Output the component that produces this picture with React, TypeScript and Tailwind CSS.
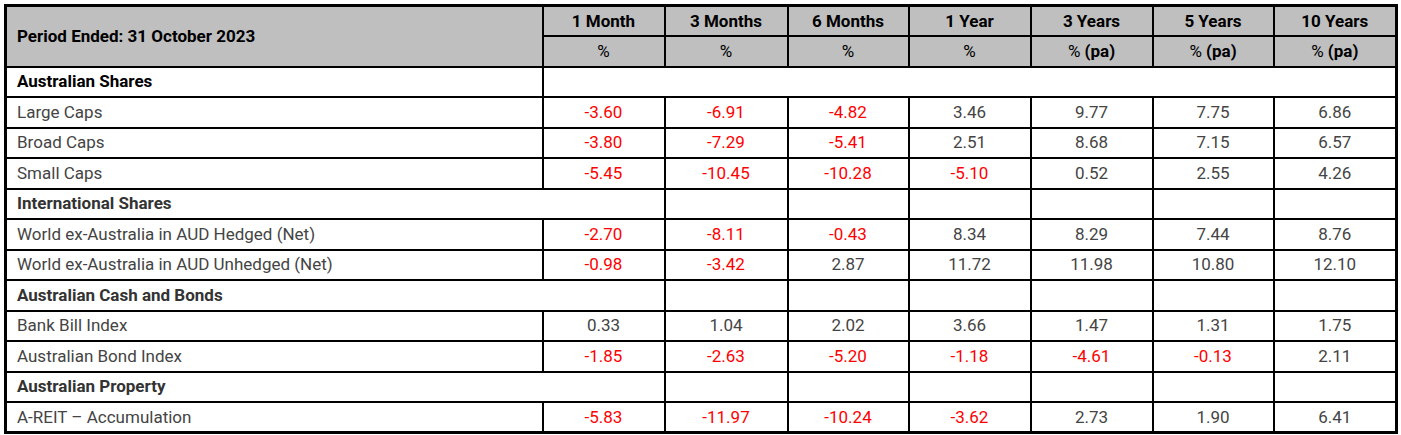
import React from "react";

type Row =
  | { kind: "section"; label: string; span?: boolean }
  | { kind: "data"; label: string; values: string[] };

const rows: Row[] = [
  { kind: "section", label: "Australian Shares", span: true },
  { kind: "data", label: "Large Caps", values: ["-3.60", "-6.91", "-4.82", "3.46", "9.77", "7.75", "6.86"] },
  { kind: "data", label: "Broad Caps", values: ["-3.80", "-7.29", "-5.41", "2.51", "8.68", "7.15", "6.57"] },
  { kind: "data", label: "Small Caps", values: ["-5.45", "-10.45", "-10.28", "-5.10", "0.52", "2.55", "4.26"] },
  { kind: "section", label: "International Shares" },
  { kind: "data", label: "World ex-Australia in AUD Hedged (Net)", values: ["-2.70", "-8.11", "-0.43", "8.34", "8.29", "7.44", "8.76"] },
  { kind: "data", label: "World ex-Australia in AUD Unhedged (Net)", values: ["-0.98", "-3.42", "2.87", "11.72", "11.98", "10.80", "12.10"] },
  { kind: "section", label: "Australian Cash and Bonds" },
  { kind: "data", label: "Bank Bill Index", values: ["0.33", "1.04", "2.02", "3.66", "1.47", "1.31", "1.75"] },
  { kind: "data", label: "Australian Bond Index", values: ["-1.85", "-2.63", "-5.20", "-1.18", "-4.61", "-0.13", "2.11"] },
  { kind: "section", label: "Australian Property" },
  { kind: "data", label: "A-REIT \u2013 Accumulation", values: ["-5.83", "-11.97", "-10.24", "-3.62", "2.73", "1.90", "6.41"] },
];

const periods = [
  { name: "1 Month", unit: "%", pa: false },
  { name: "3 Months", unit: "%", pa: false },
  { name: "6 Months", unit: "%", pa: false },
  { name: "1 Year", unit: "%", pa: false },
  { name: "3 Years", unit: "%", pa: true },
  { name: "5 Years", unit: "%", pa: true },
  { name: "10 Years", unit: "%", pa: true },
];

const colWidths = [537, 122, 123, 121, 122, 122, 121, 123];

const cell = "border-2 border-black p-0 align-middle";

export default function App() {
  return (
    <div className="bg-white w-[1401px] h-[435px] pt-[4px] pl-[4px] font-['Roboto',sans-serif] text-[17px] leading-none">
      <table className="table-fixed border-collapse w-[1391px] border-[3px] border-black">
        <colgroup>
          {colWidths.map((w, i) => (
            <col key={i} style={{ width: w }} />
          ))}
        </colgroup>
        <thead>
          <tr className="h-[30.5px] bg-[#bfbfbf]">
            <th rowSpan={2} className={`${cell} text-left pl-[10px] font-bold text-black`}>
              Period Ended: 31 October 2023
            </th>
            {periods.map((p) => (
              <th key={p.name} className={`${cell} text-center font-bold text-black`}>
                {p.name}
              </th>
            ))}
          </tr>
          <tr className="h-[30.5px] bg-[#bfbfbf]">
            {periods.map((p) => (
              <th key={p.name} className={`${cell} text-center font-normal text-black`}>
                {p.unit}
                {p.pa && <span className="font-bold"> (pa)</span>}
              </th>
            ))}
          </tr>
        </thead>
        <tbody>
          {rows.map((r, i) =>
            r.kind === "section" ? (
              <tr key={i} className="h-[30.5px]">
                {r.span ? (
                  <>
                    <td className={`${cell} pl-[10px] font-bold text-black`}>{r.label}</td>
                    <td colSpan={7} className={cell} />
                  </>
                ) : (
                  <>
                    <td colSpan={2} className={`${cell} pl-[10px] font-bold text-[#333333]`}>
                      {r.label}
                    </td>
                    {[0, 1, 2, 3, 4, 5].map((k) => (
                      <td key={k} className={cell} />
                    ))}
                  </>
                )}
              </tr>
            ) : (
              <tr key={i} className="h-[30.5px]">
                <td className={`${cell} pl-[10px] text-[#444444]`}>{r.label}</td>
                {r.values.map((v, k) => (
                  <td
                    key={k}
                    className={`${cell} text-center ${v.startsWith("-") ? "text-[#ff0000]" : "text-[#444444]"}`}
                  >
                    {v}
                  </td>
                ))}
              </tr>
            )
          )}
        </tbody>
      </table>
    </div>
  );
}
